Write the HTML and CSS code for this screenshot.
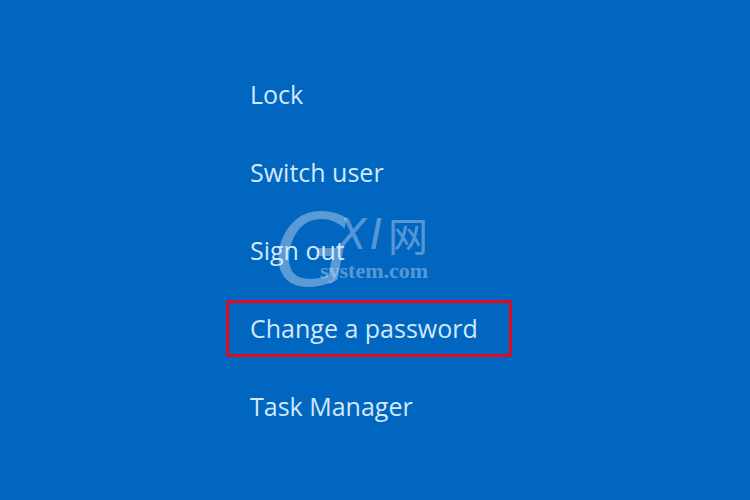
FILE: index.html
```html
<!DOCTYPE html>
<html lang="en">
<head>
  <meta charset="UTF-8">
  <meta name="viewport" content="width=device-width, initial-scale=1.0">
  <title>Security options</title>
  <link rel="stylesheet" href="styles.css">
</head>
<body>
  <div class="screen">
    <ul class="options">
      <li class="option">Lock</li>
      <li class="option">Switch user</li>
      <li class="option">Sign out</li>
      <li class="option selected">Change a password</li>
      <li class="option">Task Manager</li>
    </ul>

    <div class="watermark">
      <span class="wm-g">G</span>
      <span class="wm-x">X</span>
      <span class="wm-i">I</span>
      <span class="wm-cn">网</span>
      <span class="wm-site">system.com</span>
    </div>
  </div>
</body>
</html>
```

FILE: styles.css
```css
body {
  margin: 0;
  padding: 0;
  background-color: #0066bf;
  font-family: "Open Sans", "Noto Sans", sans-serif;
}

.screen {
  position: relative;
  width: 750px;
  height: 500px;
  overflow: hidden;
}

.options {
  list-style: none;
  margin: 0;
  padding: 66px 0 0 226px;
  display: flex;
  flex-direction: column;
  gap: 22px;
}

.option {
  box-sizing: border-box;
  width: 286px;
  height: 56px;
  padding-left: 21px;
  padding-bottom: 1px;
  border: 3px solid transparent;
  border-radius: 3px;
  display: flex;
  align-items: center;
  color: #d2e8fc;
  font-size: 25px;
}

.option.selected {
  height: 57px;
  margin-bottom: -1px;
  border-color: #e3081e;
}

.watermark {
  position: absolute;
  left: 274px;
  top: 206px;
  width: 180px;
  height: 84px;
  color: rgba(225, 235, 250, 0.4);
  pointer-events: none;
}

.wm-g {
  position: absolute;
  left: 0;
  top: -4px;
  font-family: "DejaVu Sans", sans-serif;
  font-weight: 300;
  font-style: italic;
  font-size: 100px;
  line-height: 1;
}

.wm-x,
.wm-i {
  position: absolute;
  top: 8px;
  font-family: "DejaVu Sans", sans-serif;
  font-style: italic;
  font-size: 42px;
  line-height: 1;
}

.wm-x {
  left: 64px;
}

.wm-i {
  left: 96px;
}

.wm-cn {
  position: absolute;
  left: 114px;
  top: 8px;
  font-family: "Noto Sans CJK SC", sans-serif;
  font-size: 40px;
  line-height: 1;
}

.wm-site {
  position: absolute;
  left: 46px;
  top: 54px;
  font-family: "Liberation Serif", serif;
  font-weight: bold;
  font-size: 22px;
  line-height: 1;
}
```
